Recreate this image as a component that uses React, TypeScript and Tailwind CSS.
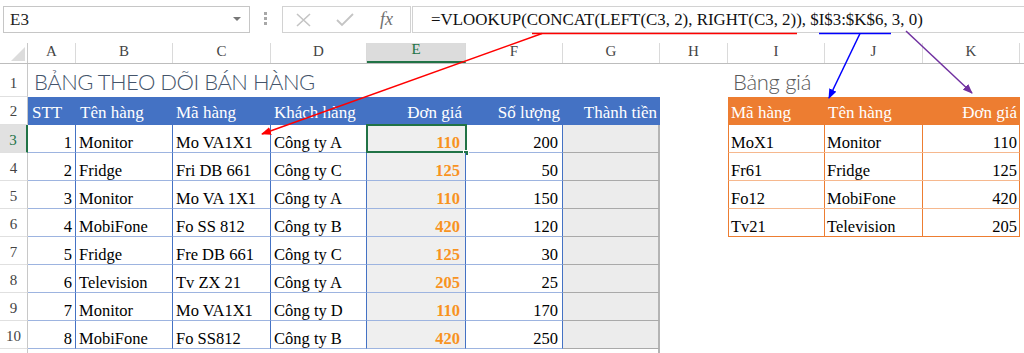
import React from 'react';

const serif = "font-['Liberation_Serif','Times_New_Roman',serif]";

const sales: [number, string, string, string, number, number][] = [
  [1, 'Monitor', 'Mo VA1X1', 'Công ty A', 110, 200],
  [2, 'Fridge', 'Fri DB 661', 'Công ty C', 125, 50],
  [3, 'Monitor', 'Mo VA 1X1', 'Công ty A', 110, 150],
  [4, 'MobiFone', 'Fo SS 812', 'Công ty B', 420, 120],
  [5, 'Fridge', 'Fre DB 661', 'Công ty C', 125, 30],
  [6, 'Television', 'Tv ZX 21', 'Công ty A', 205, 25],
  [7, 'Monitor', 'Mo VA1X1', 'Công ty D', 110, 170],
  [8, 'MobiFone', 'Fo SS812', 'Công ty B', 420, 250],
];

const prices: [string, string, number][] = [
  ['MoX1', 'Monitor', 110],
  ['Fr61', 'Fridge', 125],
  ['Fo12', 'MobiFone', 420],
  ['Tv21', 'Television', 205],
];

const letters: [string, string][] = [
  ['A', 'w-[48px]'],
  ['B', 'w-[97px]'],
  ['C', 'w-[98px]'],
  ['D', 'w-[96px]'],
  ['E', 'w-[99px]'],
  ['F', 'w-[97px]'],
  ['G', 'w-[97px]'],
  ['H', 'w-[68px]'],
  ['I', 'w-[97px]'],
  ['J', 'w-[98px]'],
  ['K', 'w-[97px]'],
];

function RowHead({ n, active = false }: { n: number; active?: boolean }) {
  return (
    <div
      className={`w-[28px] shrink-0 h-full flex items-end justify-center pb-[2px] text-[15px] border-b border-b-[#e0e0e0] ${
        active ? 'bg-[#e1e1e1] text-[#217346] border-r-2 border-r-[#217346]' : 'text-[#444] border-r border-r-[#c8c8c8]'
      }`}
    >
      {n}
    </div>
  );
}

function FormulaBar() {
  return (
    <div className="h-[43px] flex items-start pt-[6px] bg-white">
      <div className="ml-[3px] w-[247px] h-[27px] border border-[#c6c6c6] flex items-center justify-between pl-[6px] pr-[8px]">
        <span className="text-[17px] text-[#222]">E3</span>
        <svg width="8" height="5" viewBox="0 0 8 5">
          <path d="M0 0 L8 0 L4 4 Z" fill="#777" />
        </svg>
      </div>
      <div className="ml-[14px] mt-[6px] flex flex-col gap-[2px]">
        <div className="w-[3px] h-[3px] bg-[#a8a8a8]" />
        <div className="w-[3px] h-[3px] bg-[#a8a8a8]" />
        <div className="w-[3px] h-[3px] bg-[#a8a8a8]" />
      </div>
      <div className="ml-[15px] w-[129px] h-[27px] border border-[#d2d2d2] flex items-center">
        <svg className="ml-[13px]" width="15" height="14" viewBox="0 0 15 14">
          <path d="M1 1 L14 13 M14 1 L1 13" stroke="#c4c4c4" strokeWidth="1.6" />
        </svg>
        <svg className="ml-[25px]" width="18" height="14" viewBox="0 0 18 14">
          <path d="M1 7 L6 12 L17 1" stroke="#c4c4c4" strokeWidth="1.8" fill="none" />
        </svg>
        <span className="ml-[26px] italic text-[18px] text-[#707070]">fx</span>
      </div>
      <div className="ml-[1px] flex-1 h-[27px] border border-[#d2d2d2] border-r-0 flex items-center pl-[18px] text-[16.9px] text-[#111] whitespace-nowrap">
        =VLOOKUP(CONCAT(LEFT(C3, 2), RIGHT(C3, 2)), $I$3:$K$6, 3, 0)
      </div>
    </div>
  );
}

function ColumnHeads() {
  return (
    <div className="h-[21px] flex border-b border-b-[#bdbdbd]">
      <div className="w-[28px] shrink-0 h-full border-r border-r-[#c8c8c8] relative">
        <div className="absolute right-[2px] bottom-[2px] w-0 h-0 border-l-[14px] border-l-transparent border-b-[14px] border-b-[#dcdcdc]" />
      </div>
      {letters.map(([l, w]) => (
        <div
          key={l}
          className={`${w} shrink-0 h-full flex items-end justify-center pb-[1px] text-[15px] border-r border-r-[#dadada] ${
            l === 'E' ? 'bg-[#dcdcdc] text-[#217346] border-b-2 border-b-[#217346]' : 'text-[#444]'
          }`}
        >
          {l}
        </div>
      ))}
      <div className="flex-1" />
    </div>
  );
}

const td = 'shrink-0 h-full flex items-end border-b';

export default function App() {
  return (
    <div className={`relative w-[1024px] h-[353px] overflow-hidden bg-white ${serif}`}>
      <FormulaBar />
      <ColumnHeads />

      {/* row 1 */}
      <div className="h-[33px] flex">
        <RowHead n={1} />
        <div className="w-[632px] shrink-0 flex items-end pl-[6px] pb-[1px] font-['Lato','Carlito',sans-serif] font-light text-[22px] tracking-[-0.5px] leading-[28px] text-[#44546a]">
          BẢNG THEO DÕI BÁN HÀNG
        </div>
        <div className="w-[68px] shrink-0" />
        <div className="flex items-end pl-[5px] pb-[1px] font-['Lato','Carlito',sans-serif] font-light text-[22px] tracking-[-0.3px] leading-[28px] text-[#595959]">
          Bảng giá
        </div>
      </div>

      {/* row 2 */}
      <div className="h-[28px] flex">
        <RowHead n={2} />
        <div className="w-[632px] shrink-0 h-full flex items-end bg-[#4472c4] text-white text-[17px] leading-[22px] pb-[1px]">
          <div className="w-[48px] pl-[4px]">STT</div>
          <div className="w-[97px] pl-[4px]">Tên hàng</div>
          <div className="w-[98px] pl-[3px]">Mã hàng</div>
          <div className="w-[96px] pl-[3px]">Khách hàng</div>
          <div className="w-[99px] text-right pr-[4px]">Đơn giá</div>
          <div className="w-[97px] text-right pr-[3px]">Số lượng</div>
          <div className="w-[97px] text-right pr-[3px] whitespace-nowrap">Thành tiền</div>
        </div>
        <div className="w-[68px] shrink-0" />
        <div className="w-[292px] shrink-0 h-full flex items-end bg-[#ed7d31] text-white text-[17px] leading-[22px] pb-[1px]">
          <div className="w-[97px] pl-[3px]">Mã hàng</div>
          <div className="w-[98px] pl-[3px]">Tên hàng</div>
          <div className="w-[97px] text-right pr-[3px]">Đơn giá</div>
        </div>
      </div>

      {/* rows 3..10 */}
      {sales.map(([stt, name, code, cust, price, qty], i) => {
        const p = prices[i];
        return (
          <div key={stt} className="h-[28px] flex text-[16.5px] leading-[19px] text-black">
            <RowHead n={i + 3} active={i === 0} />
            <div className={`${td} w-[48px] justify-end pr-[3px] border-r border-r-[#4472c4] border-b-[#9db4e0]`}>{stt}</div>
            <div className={`${td} w-[97px] pl-[3px] border-r border-r-[#4472c4] border-b-[#9db4e0]`}>{name}</div>
            <div className={`${td} w-[98px] pl-[3px] border-r border-r-[#4472c4] border-b-[#9db4e0]`}>{code}</div>
            <div className={`${td} w-[96px] pl-[3px] border-r border-r-[#4472c4] border-b-[#9db4e0]`}>{cust}</div>
            <div
              className={`${td} relative w-[99px] justify-end pr-[5px] bg-[#efefef] font-bold text-[#f8931f] border-r border-r-[#4472c4] border-b-[#9db4e0]`}
            >
              {price}
              {i === 0 && (
                <>
                  <div className="absolute left-[-1px] top-[-1px] right-[-2px] bottom-[-1px] border-2 border-[#217346]" />
                  <div className="absolute right-[-4px] bottom-[-4px] w-[6px] h-[6px] bg-[#217346] border border-white" />
                </>
              )}
            </div>
            <div className={`${td} w-[97px] justify-end pr-[4px] border-r border-r-[#4472c4] border-b-[#9db4e0]`}>{qty}</div>
            <div className={`${td} w-[97px] bg-[#ececec] border-r-2 border-r-[#b4b4b4] border-b-[#a9a9a9]`} />
            <div className="w-[68px] shrink-0" />
            {p ? (
              <div className={`w-[292px] shrink-0 h-full flex border-l border-r border-[#ed7d31] ${i === 3 ? 'border-b border-b-[#ed7d31]' : 'border-b border-b-[#f6b88e]'}`}>
                <div className="w-[96px] h-full flex items-end pl-[2px] border-r border-r-[#ed7d31]">{p[0]}</div>
                <div className="w-[98px] h-full flex items-end pl-[2px] border-r border-r-[#ed7d31]">{p[1]}</div>
                <div className="flex-1 h-full flex items-end justify-end pr-[2px]">{p[2]}</div>
              </div>
            ) : null}
          </div>
        );
      })}

      {/* row 11 (cut off) */}
      <div className="h-[4px] flex">
        <div className="w-[28px] shrink-0 h-full border-r border-r-[#c8c8c8]" />
        <div className="w-[632px] shrink-0 h-full border-r-2 border-r-[#b4b4b4]" />
      </div>

      {/* annotation arrows */}
      <svg className="absolute inset-0 pointer-events-none" width="1024" height="353" viewBox="0 0 1024 353">
        <defs>
          <marker id="ar" markerWidth="10" markerHeight="8" refX="9" refY="4" orient="auto" markerUnits="userSpaceOnUse">
            <path d="M0 0 L10 4 L0 8 Z" fill="#ff0000" />
          </marker>
          <marker id="ab" markerWidth="10" markerHeight="8" refX="9" refY="4" orient="auto" markerUnits="userSpaceOnUse">
            <path d="M0 0 L10 4 L0 8 Z" fill="#0000ff" />
          </marker>
          <marker id="ap" markerWidth="10" markerHeight="8" refX="9" refY="4" orient="auto" markerUnits="userSpaceOnUse">
            <path d="M0 0 L10 4 L0 8 Z" fill="#7030a0" />
          </marker>
        </defs>
        <line x1="532" y1="33.5" x2="797" y2="33.5" stroke="#ff0000" strokeWidth="1.5" />
        <line x1="542" y1="33.5" x2="262" y2="134" stroke="#ff0000" strokeWidth="1.5" markerEnd="url(#ar)" />
        <line x1="819" y1="33.5" x2="891" y2="33.5" stroke="#0000ff" strokeWidth="1.5" />
        <line x1="860" y1="33.5" x2="829" y2="98" stroke="#0000ff" strokeWidth="1.5" markerEnd="url(#ab)" />
        <line x1="906" y1="31" x2="972" y2="93" stroke="#7030a0" strokeWidth="1.5" markerEnd="url(#ap)" />
      </svg>
    </div>
  );
}
